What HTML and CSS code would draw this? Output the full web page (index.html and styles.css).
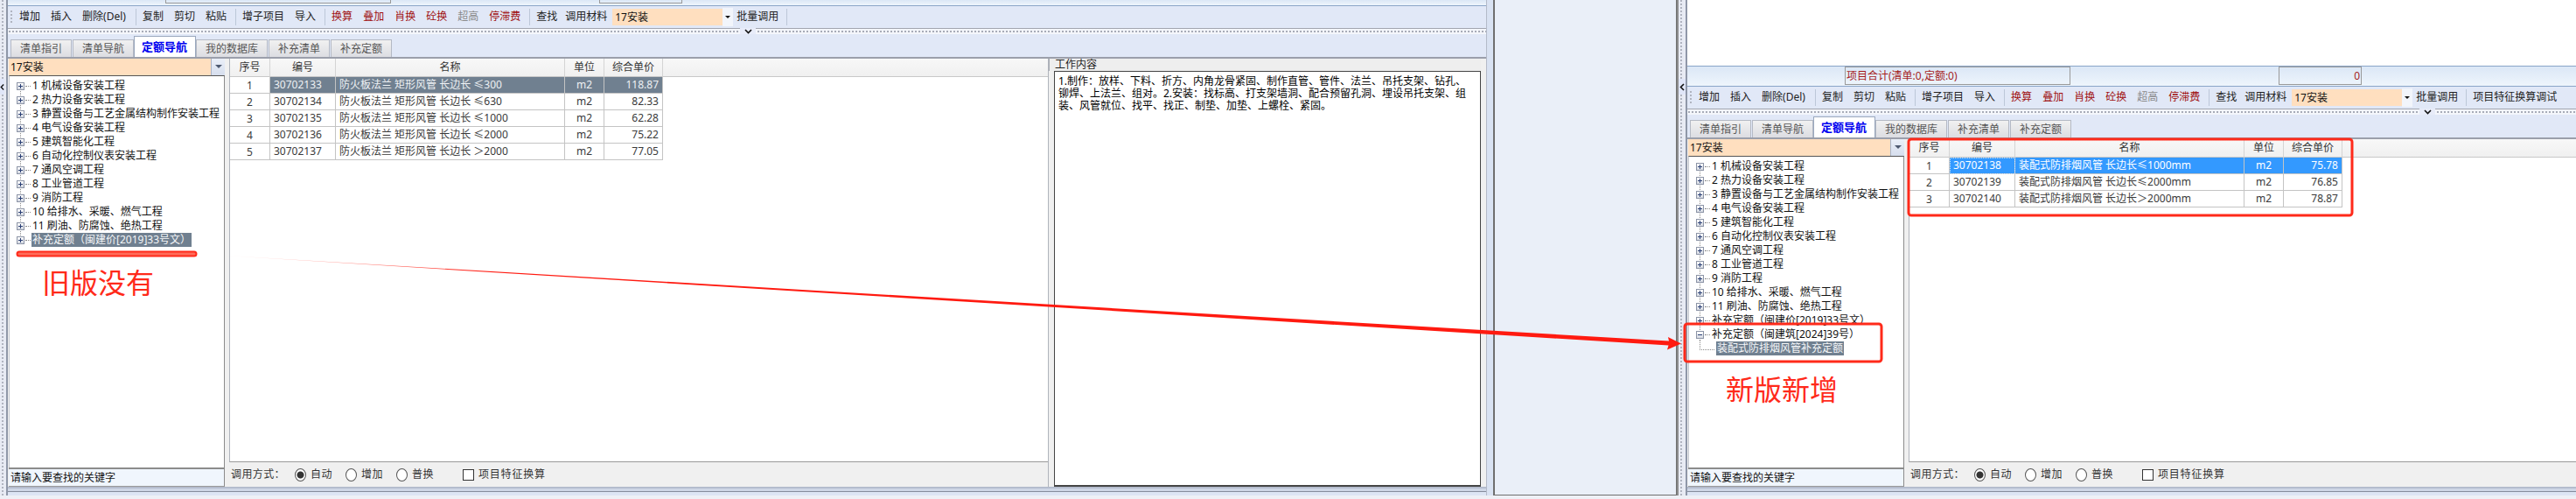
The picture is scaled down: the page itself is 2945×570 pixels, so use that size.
FILE: index.html
```html
<!DOCTYPE html>
<html lang="zh-CN">
<head>
  <meta charset="UTF-8" />
  <title>定额导航 - 新旧版对比</title>
  <link rel="stylesheet" href="styles.css">
</head>
<body>
  <!-- old version -->
  <div class="splitter splitter-old">
    <div class="split-dots split-top"></div>
    <div class="split-btn"><svg width="6" height="9" viewBox="0 0 6 9"><polyline points="5,1 1.5,4.5 5,8" fill="none" stroke="#111" stroke-width="1.6"/></svg></div>
    <div class="split-dots split-rest"></div>
  </div>

  <section class="win win-old">
    <div class="status status-old">
      <div class="status-box status-sum">项目合计(清单:0,定额:0)</div>
      <div class="status-box status-val">0</div>
    </div>

    <div class="toolbar">
      <span class="grip"></span>
      <span class="tool">增加</span><span class="tool">插入</span><span class="tool tool-del">删除(Del)</span>
      <span class="tool-sep"></span>
      <span class="tool">复制</span><span class="tool">剪切</span><span class="tool">粘贴</span>
      <span class="tool-sep"></span>
      <span class="tool">增子项目</span><span class="tool">导入</span>
      <span class="tool-sep"></span>
      <span class="tool tool-red">换算</span><span class="tool tool-red">叠加</span><span class="tool tool-red">肖换</span><span class="tool tool-red">砼换</span><span class="tool tool-off">超高</span><span class="tool tool-red">停滞费</span>
      <span class="tool-sep"></span>
      <span class="tool">查找</span><span class="tool tool-mat">调用材料</span>
      <span class="tool-combo">17安装</span><span class="tool-arrow"></span>
      <span class="tool tool-batch">批量调用</span>
      <span class="tool-sep tool-sep-end"></span>
    </div>

    <div class="ruler">
      <div class="ruler-dots ruler-first"></div>
      <div class="ruler-btn"><svg width="9" height="6" viewBox="0 0 9 6"><polyline points="1,1 4.5,4.5 8,1" fill="none" stroke="#111" stroke-width="1.6"/></svg></div>
      <div class="ruler-dots ruler-last"></div>
    </div>

    <div class="tabs">
      <span class="tab">清单指引</span>
      <span class="tab">清单导航</span>
      <span class="tab tab-active">定额导航</span>
      <span class="tab">我的数据库</span>
      <span class="tab">补充清单</span>
      <span class="tab">补充定额</span>
    </div>

    <div class="main">
      <aside class="nav">
        <div class="nav-combo"><span>17安装</span><span class="nav-arrow"></span></div>
        <ul class="tree">
          <li class="node node-first"><i class="exp"></i><i class="dash"></i><span class="label">1 机械设备安装工程</span></li>
          <li class="node"><i class="exp"></i><i class="dash"></i><span class="label">2 热力设备安装工程</span></li>
          <li class="node"><i class="exp"></i><i class="dash"></i><span class="label">3 静置设备与工艺金属结构制作安装工程</span></li>
          <li class="node"><i class="exp"></i><i class="dash"></i><span class="label">4 电气设备安装工程</span></li>
          <li class="node"><i class="exp"></i><i class="dash"></i><span class="label">5 建筑智能化工程</span></li>
          <li class="node"><i class="exp"></i><i class="dash"></i><span class="label">6 自动化控制仪表安装工程</span></li>
          <li class="node"><i class="exp"></i><i class="dash"></i><span class="label">7 通风空调工程</span></li>
          <li class="node"><i class="exp"></i><i class="dash"></i><span class="label">8 工业管道工程</span></li>
          <li class="node"><i class="exp"></i><i class="dash"></i><span class="label">9 消防工程</span></li>
          <li class="node"><i class="exp"></i><i class="dash"></i><span class="label">10 给排水、采暖、燃气工程</span></li>
          <li class="node"><i class="exp"></i><i class="dash"></i><span class="label">11 刷油、防腐蚀、绝热工程</span></li>
          <li class="node node-last"><i class="exp"></i><i class="dash"></i><span class="label label-sel">补充定额（闽建价[2019]33号文）</span></li>
        </ul>
        <div class="nav-search">请输入要查找的关键字</div>
      </aside>

      <div class="pane pane-old">
        <div class="grid">
          <table>
            <thead>
              <tr><th class="c-no">序号</th><th class="c-code">编号</th><th class="c-name">名称</th><th class="c-unit">单位</th><th class="c-price">综合单价</th><th class="c-fill"></th></tr>
            </thead>
            <tbody>
              <tr class="row-sel"><td class="t-no">1</td><td>30702133</td><td>防火板法兰 矩形风管 长边长 ≤300</td><td class="t-unit">m2</td><td class="t-price">118.87</td><td class="t-fill"></td></tr>
              <tr><td class="t-no">2</td><td>30702134</td><td>防火板法兰 矩形风管 长边长 ≤630</td><td class="t-unit">m2</td><td class="t-price">82.33</td><td class="t-fill"></td></tr>
              <tr><td class="t-no">3</td><td>30702135</td><td>防火板法兰 矩形风管 长边长 ≤1000</td><td class="t-unit">m2</td><td class="t-price">62.28</td><td class="t-fill"></td></tr>
              <tr><td class="t-no">4</td><td>30702136</td><td>防火板法兰 矩形风管 长边长 ≤2000</td><td class="t-unit">m2</td><td class="t-price">75.22</td><td class="t-fill"></td></tr>
              <tr><td class="t-no">5</td><td>30702137</td><td>防火板法兰 矩形风管 长边长 ＞2000</td><td class="t-unit">m2</td><td class="t-price">77.05</td><td class="t-fill"></td></tr>
            </tbody>
          </table>
        </div>
        <div class="options">
          <span class="opt-title">调用方式：</span>
          <label class="opt"><input type="radio" name="modeOld" checked>自动</label>
          <label class="opt"><input type="radio" name="modeOld">增加</label>
          <label class="opt"><input type="radio" name="modeOld">普换</label>
          <label class="opt opt-check"><input type="checkbox">项目特征换算</label>
        </div>
      </div>

      <div class="work">
        <div class="work-head">工作内容</div>
        <div class="work-body">1.制作：放样、下料、折方、内角龙骨紧固、制作直管、管件、法兰、吊托支架、钻孔、铆焊、上法兰、组对。2.安装：找标高、打支架墙洞、配合预留孔洞、埋设吊托支架、组装、风管就位、找平、找正、制垫、加垫、上螺栓、紧固。</div>
      </div>
    </div>

    <div class="win-foot"></div>
  </section>

  <div class="win-edge"></div>
  <div class="gap-panel"></div>

  <!-- new version -->
  <div class="splitter splitter-new">
    <div class="split-dots split-top"></div>
    <div class="split-btn"><svg width="6" height="9" viewBox="0 0 6 9"><polyline points="5,1 1.5,4.5 5,8" fill="none" stroke="#111" stroke-width="1.6"/></svg></div>
    <div class="split-dots split-rest"></div>
  </div>

  <section class="win win-new">
    <div class="blank"></div>
    <div class="status status-new">
      <div class="status-box status-sum">项目合计(清单:0,定额:0)</div>
      <div class="status-box status-val">0</div>
    </div>

    <div class="toolbar">
      <span class="grip"></span>
      <span class="tool">增加</span><span class="tool">插入</span><span class="tool tool-del">删除(Del)</span>
      <span class="tool-sep"></span>
      <span class="tool">复制</span><span class="tool">剪切</span><span class="tool">粘贴</span>
      <span class="tool-sep"></span>
      <span class="tool">增子项目</span><span class="tool">导入</span>
      <span class="tool-sep"></span>
      <span class="tool tool-red">换算</span><span class="tool tool-red">叠加</span><span class="tool tool-red">肖换</span><span class="tool tool-red">砼换</span><span class="tool tool-off">超高</span><span class="tool tool-red">停滞费</span>
      <span class="tool-sep"></span>
      <span class="tool">查找</span><span class="tool tool-mat">调用材料</span>
      <span class="tool-combo">17安装</span><span class="tool-arrow"></span>
      <span class="tool tool-batch">批量调用</span>
      <span class="tool-sep tool-sep-end"></span>
      <span class="tool">项目特征换算调试</span>
    </div>

    <div class="ruler">
      <div class="ruler-dots ruler-first"></div>
      <div class="ruler-btn"><svg width="9" height="6" viewBox="0 0 9 6"><polyline points="1,1 4.5,4.5 8,1" fill="none" stroke="#111" stroke-width="1.6"/></svg></div>
      <div class="ruler-dots ruler-last"></div>
    </div>

    <div class="tabs">
      <span class="tab">清单指引</span>
      <span class="tab">清单导航</span>
      <span class="tab tab-active">定额导航</span>
      <span class="tab">我的数据库</span>
      <span class="tab">补充清单</span>
      <span class="tab">补充定额</span>
    </div>

    <div class="main">
      <aside class="nav">
        <div class="nav-combo"><span>17安装</span><span class="nav-arrow"></span></div>
        <ul class="tree">
          <li class="node node-first"><i class="exp"></i><i class="dash"></i><span class="label">1 机械设备安装工程</span></li>
          <li class="node"><i class="exp"></i><i class="dash"></i><span class="label">2 热力设备安装工程</span></li>
          <li class="node"><i class="exp"></i><i class="dash"></i><span class="label">3 静置设备与工艺金属结构制作安装工程</span></li>
          <li class="node"><i class="exp"></i><i class="dash"></i><span class="label">4 电气设备安装工程</span></li>
          <li class="node"><i class="exp"></i><i class="dash"></i><span class="label">5 建筑智能化工程</span></li>
          <li class="node"><i class="exp"></i><i class="dash"></i><span class="label">6 自动化控制仪表安装工程</span></li>
          <li class="node"><i class="exp"></i><i class="dash"></i><span class="label">7 通风空调工程</span></li>
          <li class="node"><i class="exp"></i><i class="dash"></i><span class="label">8 工业管道工程</span></li>
          <li class="node"><i class="exp"></i><i class="dash"></i><span class="label">9 消防工程</span></li>
          <li class="node"><i class="exp"></i><i class="dash"></i><span class="label">10 给排水、采暖、燃气工程</span></li>
          <li class="node"><i class="exp"></i><i class="dash"></i><span class="label">11 刷油、防腐蚀、绝热工程</span></li>
          <li class="node"><i class="exp"></i><i class="dash"></i><span class="label">补充定额（闽建价[2019]33号文）</span></li>
          <li class="node node-last"><i class="exp exp-open"></i><i class="dash"></i><span class="label">补充定额（闽建筑[2024]39号）</span></li>
          <li class="node node-child"><i class="elbow"></i><span class="label label-sel">装配式防排烟风管补充定额</span></li>
        </ul>
        <div class="nav-search">请输入要查找的关键字</div>
      </aside>

      <div class="pane">
        <div class="grid">
          <table>
            <thead>
              <tr><th class="c-no">序号</th><th class="c-code">编号</th><th class="c-name">名称</th><th class="c-unit">单位</th><th class="c-price">综合单价</th><th class="c-fill"></th></tr>
            </thead>
            <tbody>
              <tr class="row-focus"><td class="t-no">1</td><td class="t-focus">30702138</td><td>装配式防排烟风管 长边长≤1000mm</td><td class="t-unit">m2</td><td class="t-price">75.78</td><td class="t-fill"></td></tr>
              <tr><td class="t-no">2</td><td>30702139</td><td>装配式防排烟风管 长边长≤2000mm</td><td class="t-unit">m2</td><td class="t-price">76.85</td><td class="t-fill"></td></tr>
              <tr><td class="t-no">3</td><td>30702140</td><td>装配式防排烟风管 长边长＞2000mm</td><td class="t-unit">m2</td><td class="t-price">78.87</td><td class="t-fill"></td></tr>
            </tbody>
          </table>
        </div>
        <div class="options">
          <span class="opt-title">调用方式：</span>
          <label class="opt"><input type="radio" name="modeNew" checked>自动</label>
          <label class="opt"><input type="radio" name="modeNew">增加</label>
          <label class="opt"><input type="radio" name="modeNew">普换</label>
          <label class="opt opt-check"><input type="checkbox">项目特征换算</label>
        </div>
      </div>
    </div>

    <div class="win-foot"></div>
  </section>

  <!-- red markup drawn over the screenshot -->
  <svg class="markup" width="2945" height="570" viewBox="0 0 2945 570">
    <defs>
      <linearGradient id="arrowFade" gradientUnits="userSpaceOnUse" x1="240" y1="0" x2="560" y2="0">
        <stop offset="0" stop-color="#ff2a1a" stop-opacity="0.1"/>
        <stop offset="1" stop-color="#ff1a10"/>
      </linearGradient>
    </defs>
    <rect x="19.5" y="287.5" width="205" height="5" rx="2.5" fill="#ff6a58" stroke="#ff2a1a" stroke-width="2"/>
    <polygon points="240,291 1908,389.6 1907,385 1922,392.5 1906,399.5 1907.5,394.6" fill="url(#arrowFade)"/>
    <rect x="2182" y="159" width="507" height="87" rx="3" fill="none" stroke="#ff2a1a" stroke-width="3"/>
    <rect x="1926" y="370" width="225" height="43" rx="3" fill="none" stroke="#ff2a1a" stroke-width="3"/>
  </svg>
  <div class="note note-old">旧版没有</div>
  <div class="note note-new">新版新增</div>
</body>
</html>
```

FILE: styles.css
```css
* {
  box-sizing: border-box;
}

body {
  margin: 0;
  width: 2945px;
  height: 570px;
  overflow: hidden;
  display: flex;
  position: relative;
  background: #eef0f6;
  color: #222;
  font-family: "Noto Sans", "Noto Sans CJK SC", sans-serif;
  font-size: 12px;
  line-height: 16px;
}

/* vertical dotted splitters */
.splitter {
  height: 566px;
  display: flex;
  flex-direction: column;
  background: #e8ebf4;
}

.splitter-old {
  width: 9px;
  padding-right: 2px;
  border-right: 2px solid #8f97a8;
}

.splitter-new {
  width: 12px;
  border-left: 2px solid #8c8c8c;
  border-right: 2px solid #8f97a8;
}

.split-top {
  height: 90px;
}

.split-rest {
  flex: 1;
}

.split-dots {
  background: linear-gradient(#b0b4c0 50%, transparent 50%) 2px 0 / 2px 4px repeat-y;
}

.split-btn {
  height: 18px;
  display: flex;
  align-items: center;
  justify-content: center;
  background: #e0e6f8;
}

/* window */
.win {
  display: flex;
  flex-direction: column;
  height: 570px;
  background: #e1e8f7;
}

.win-old {
  width: 1690px;
}

.win-new {
  width: 1016px;
}

.win-edge {
  width: 8px;
  height: 566px;
  background: #d9e2f2;
  border-left: 1px solid #b4bac8;
}

.gap-panel {
  width: 210px;
  height: 566px;
  background: #eaeff8;
  border-left: 2px solid #6f6f6f;
  border-right: 1px solid #6f6f6f;
  border-bottom: 1px solid #6f6f6f;
}

.blank {
  height: 75px;
  flex-shrink: 0;
  background: #fff;
}

.status {
  display: flex;
  align-items: flex-end;
  flex-shrink: 0;
  overflow: hidden;
  padding-left: 180px;
  background: linear-gradient(#dbe7f6, #eef5fc);
  border-bottom: 1px solid #8aa5c8;
}

.status-old {
  height: 7px;
  padding-bottom: 2px;
}

.status-new {
  height: 24px;
  padding-bottom: 1px;
  border-top: 1px solid #8aa5c8;
}

.status-box {
  height: 21px;
  flex-shrink: 0;
  border: 1px solid #999;
  color: #a51c1c;
  line-height: 19px;
  padding: 0 1px;
}

.status-sum {
  width: 258px;
}

.status-val {
  width: 95px;
  margin-left: 238px;
  text-align: right;
}

/* toolbar */
.toolbar {
  height: 25px;
  flex-shrink: 0;
  display: flex;
  align-items: center;
  gap: 12px;
  padding-left: 3px;
  padding-bottom: 1px;
  white-space: nowrap;
}

.grip {
  width: 2px;
  height: 14px;
  margin-right: -4px;
  background: linear-gradient(#b0b4c0 50%, transparent 50%) 0 0 / 2px 4px repeat-y;
}

.tool-del {
  width: 51px;
}

.tool-red {
  color: #a01010;
}

.tool-off {
  color: #8a8a8a;
}

.tool-sep {
  width: 1px;
  height: 19px;
  margin: 0 -5px 0 -2px;
  background: #bcc7d8;
}

.tool-sep-end {
  margin-left: -3px;
}

.tool-mat {
  margin-left: -3px;
}

.tool-combo {
  width: 126px;
  height: 19px;
  margin-left: -6px;
  padding-left: 3px;
  line-height: 19px;
  background: #ffdfbf;
  color: #111;
}

.tool-arrow {
  width: 12px;
  height: 21px;
  margin-left: -12px;
  background: #f2f5fb;
  position: relative;
}

.tool-arrow::after {
  content: "";
  position: absolute;
  left: 3px;
  top: 9px;
  border: 3px solid transparent;
  border-top: 3px solid #111;
}

.tool-batch {
  margin-left: -8px;
}

/* dotted strip under the toolbar */
.ruler {
  height: 7px;
  flex-shrink: 0;
  display: flex;
  border-top: 1px solid #a2a6b0;
  background: #f4f6fb;
}

.ruler-dots {
  background: linear-gradient(90deg, #a8acb8 50%, transparent 50%) 0 2px / 4px 2px repeat-x;
}

.ruler-first {
  width: 836px;
  margin-left: 1px;
}

.ruler-last {
  flex: 1;
  margin-left: 2px;
}

.ruler-btn {
  width: 18px;
  height: 7px;
  margin-top: -1px;
  display: flex;
  align-items: center;
  justify-content: center;
  background: #e8ecf9;
}

/* tabs */
.tabs {
  height: 26px;
  flex-shrink: 0;
  display: flex;
  align-items: flex-end;
  gap: 1px;
  padding-left: 3px;
}

.tab {
  height: 20px;
  padding: 0 10px;
  border: 1px solid #b4b9c4;
  border-bottom: none;
  background: linear-gradient(#f1f1f1, #dcdde2);
  color: #555;
  line-height: 19px;
}

.tab-active {
  height: 24px;
  padding: 0 8px;
  margin-right: -1px;
  margin-left: -1px;
  width: 71px;
  border-color: #9aa8be;
  background: #fff;
  color: #0000f0;
  font-size: 13px;
  font-weight: 700;
  line-height: 22px;
}

/* main area */
.main {
  flex: 1;
  min-height: 0;
  display: flex;
  background: #f0f0f0;
  border-top: 2px solid #9b9fab;
}

.nav {
  width: 247px;
  margin-left: 1px;
  flex-shrink: 0;
  display: flex;
  flex-direction: column;
}

.nav-combo {
  height: 19px;
  flex-shrink: 0;
  display: flex;
  justify-content: space-between;
  padding-left: 2px;
  line-height: 19px;
  background: #ffdfbf;
  color: #111;
}

.nav-arrow {
  width: 16px;
  position: relative;
  background: linear-gradient(#eaeff8, #d6deee);
  border-left: 1px solid #a9b4c8;
}

.nav-arrow::after {
  content: "";
  position: absolute;
  left: 4px;
  top: 7px;
  border: 4px solid transparent;
  border-top: 4px solid #4e5a70;
}

.tree {
  flex: 1;
  margin: 0;
  padding: 3px 0 0;
  list-style: none;
  background: #fff;
  border-top: 1px solid #555;
  border-right: 1px solid #8c8c8c;
  border-left: 1px solid #c4c8d0;
}

.node {
  height: 16px;
  display: flex;
  align-items: center;
  padding-left: 8px;
  color: #111;
  white-space: nowrap;
  background: repeating-linear-gradient(#888 0 1px, transparent 1px 2px) 12px 0 / 1px 100% no-repeat;
}

.node-first {
  background-position: 12px 8px;
  background-size: 1px 8px;
}

.node-last {
  background-size: 1px 8px;
}

.node-child {
  padding-left: 12px;
  background: none;
}

.exp {
  width: 9px;
  height: 9px;
  flex-shrink: 0;
  position: relative;
  background: linear-gradient(#fff, #d5d9e2);
  border: 1px solid #8c94a6;
}

.exp::before,
.exp::after {
  content: "";
  position: absolute;
  background: #2a3f74;
}

.exp::before {
  left: 1px;
  top: 3px;
  width: 5px;
  height: 1px;
}

.exp::after {
  left: 3px;
  top: 1px;
  width: 1px;
  height: 5px;
}

.exp-open::after {
  display: none;
}

.dash {
  width: 6px;
  margin: 0 1px 0 1px;
  flex-shrink: 0;
  border-top: 1px dotted #888;
}

.elbow {
  width: 17px;
  height: 12px;
  margin-top: -9px;
  margin-right: 2px;
  flex-shrink: 0;
  border-left: 1px dotted #888;
  border-bottom: 1px dotted #888;
}

.label {
  padding: 0 1px;
  height: 16px;
}

.label-sel {
  background: #708090;
  color: #f4f6f8;
}

.nav-search {
  height: 22px;
  flex-shrink: 0;
  padding: 2px 2px;
  color: #111;
  background: #f0f6fd;
  border-top: 2px solid #8c8c8c;
  border-bottom: 1px solid #999;
  border-right: 1px solid #8c8c8c;
}

/* table pane */
.pane {
  flex: 1;
  min-width: 0;
  display: flex;
  flex-direction: column;
  margin-left: 5px;
}

.pane-old {
  flex: none;
  width: 937px;
  border-right: 1px solid #b0b4bc;
}

.grid {
  flex: 1;
  background: #fff;
  border-left: 1px solid #b0b4bc;
  border-bottom: 1px solid #9a9a9a;
}

.grid table {
  width: 100%;
  table-layout: fixed;
  border-collapse: separate;
  border-spacing: 0;
}

.c-no { width: 46px; }
.c-code { width: 75px; }
.c-name { width: 262px; }
.c-unit { width: 45px; }
.c-price { width: 67px; }

.grid th {
  height: 21px;
  padding: 0;
  font-weight: 400;
  color: #333;
  background: linear-gradient(#f8f8f8, #f0f0f0);
  border-right: 1px solid #d4d4d4;
  border-bottom: 1px solid #c8c8c8;
}

.grid th.c-fill {
  border-right: none;
}

.grid td {
  height: 19px;
  padding: 0 4px;
  color: #3a3a3a;
  white-space: nowrap;
  overflow: hidden;
  border-right: 1px solid #c4c4c4;
  border-bottom: 1px solid #c4c4c4;
}

.grid td.t-no {
  text-align: center;
  padding-top: 2px;
}

.grid td.t-unit {
  text-align: center;
}

.grid td.t-price {
  text-align: right;
}

.grid td.t-fill {
  border: none;
}

.row-sel td:not(.t-no):not(.t-fill) {
  background: #708090;
  color: #eef1f4;
}

.row-focus td:not(.t-no):not(.t-fill) {
  background: #3399ff;
  color: #fff;
}

.grid td.t-focus {
  outline: 1px dotted #d8ecff;
  outline-offset: -1px;
}

/* options under the table */
.options {
  height: 28px;
  flex-shrink: 0;
  display: flex;
  align-items: center;
  padding-left: 2px;
  color: #333;
  white-space: nowrap;
}

.opt-title {
  width: 73px;
  letter-spacing: 0.4px;
}

.opt {
  display: flex;
  align-items: center;
  width: 58px;
  letter-spacing: 0.5px;
}

.opt-check {
  margin-left: 18px;
  width: auto;
  letter-spacing: 0.8px;
}

.opt input {
  appearance: none;
  margin: 0 5px 0 0;
  width: 13px;
  height: 15px;
  flex-shrink: 0;
  background: #fff;
  border: 1px solid #555;
  border-radius: 50%;
}

.opt input:checked {
  background: radial-gradient(circle, #333 0 3.5px, #fff 4.5px);
}

.opt input[type="checkbox"] {
  width: 13px;
  height: 13px;
  border-radius: 0;
  border-color: #333;
  margin-right: 5px;
}

/* work content panel, old version only */
.work {
  width: 494px;
  flex-shrink: 0;
  display: flex;
  flex-direction: column;
  margin-top: -1px;
}

.work-head {
  height: 15px;
  flex-shrink: 0;
  padding-left: 6px;
  line-height: 14px;
  color: #222;
  background: #eeeeee;
  border-top: 1px solid #9b9fab;
  border-left: 1px solid #a8acb4;
}

.work-body {
  flex: 1;
  margin-left: 6px;
  padding: 4px 10px 0 4px;
  line-height: 14px;
  color: #000;
  background: #fff;
  border: 1px solid #444;
  border-width: 1px 1px 2px 1px;
}

.win-foot {
  height: 14px;
  flex-shrink: 0;
  border-top: 2px solid #b4bccd;
  background: linear-gradient(#ced6e6 0 3px, #868c9c 3px 4px, #dde5f4 4px 8px, #eef0f6 8px);
}

/* red markup */
.markup {
  position: absolute;
  left: 0;
  top: 0;
}

.note {
  position: absolute;
  color: #ff2a1a;
  font-size: 32px;
  line-height: 40px;
  font-family: "Noto Sans CJK SC", sans-serif;
}

.note-old {
  left: 48px;
  top: 301px;
}

.note-new {
  left: 1973px;
  top: 423px;
}
```
